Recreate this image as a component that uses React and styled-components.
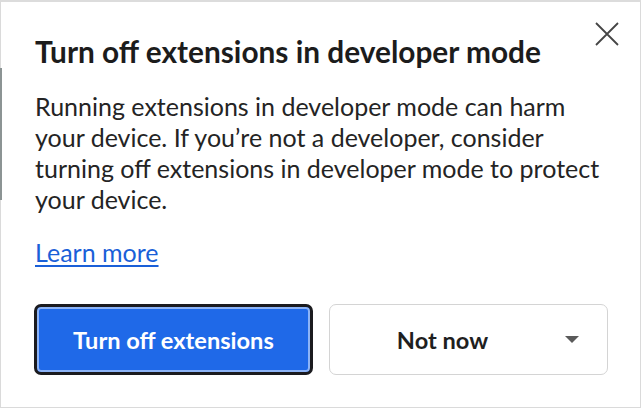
import styled, { createGlobalStyle } from "styled-components";

const Global = createGlobalStyle`
  html, body { margin: 0; padding: 0; background: #fff; }
  body { font-family: Lato, "Noto Sans", sans-serif; }
`;

const Dialog = styled.div`
  position: relative;
  box-sizing: border-box;
  width: 641px;
  height: 408px;
  border: 1px solid #dadada;
  border-top: 2px solid #dcdcdc;
  background: #fff;
  padding: 32px 32px 0 34px;
  color: #1f1f1f;

  &::before {
    content: "";
    position: absolute;
    left: -1px;
    top: 66px;
    width: 2px;
    height: 132px;
    background: #8c9494;
  }
`;

const Header = styled.div`
  display: flex;
  justify-content: space-between;
  align-items: flex-start;
`;

const Title = styled.h1`
  margin: 0;
  font-size: 29.8px;
  font-weight: 700;
  line-height: 36px;
  color: #1c1c1c;
`;

const Close = styled.button`
  border: none;
  background: none;
  padding: 0;
  margin: -14px -13px 0 0;
  width: 28px;
  height: 28px;
  display: flex;
  align-items: center;
  justify-content: center;
`;

const Body = styled.p`
  margin: 21px 0 0;
  font-size: 25px;
  line-height: 31px;
  color: #242424;
`;

const Link = styled.a`
  display: inline-block;
  margin-top: 22px;
  font-size: 25px;
  line-height: 31px;
  color: #1a5fd8;
  text-decoration: underline;
  text-underline-offset: 3px;
`;

const Actions = styled.div`
  display: flex;
  gap: 16px;
  margin-top: 36px;
  margin-left: -1px;
`;

const Button = styled.button`
  box-sizing: border-box;
  width: 280px;
  height: 71px;
  border-radius: 7px;
  font-family: inherit;
  font-size: 23.6px;
  font-weight: 700;
  display: flex;
  align-items: center;
  justify-content: center;
  position: relative;
  ${(p) =>
    p.$primary
      ? `
    background: #1f69e8;
    color: #fff;
    border: 3px solid #1b1b1f;
    box-shadow: inset 0 0 0 2px #8db4f7;
  `
      : `
    background: #fff;
    color: #1f1f1f;
    border: 1.5px solid #d4d4d4;
    padding-right: 58px;
  `}
`;

const Caret = styled.span`
  position: absolute;
  right: 28px;
  top: 31px;
  width: 0;
  height: 0;
  border-left: 7px solid transparent;
  border-right: 7px solid transparent;
  border-top: 7px solid #5a5a5a;
`;

export default function App() {
  return (
    <>
      <Global />
      <Dialog>
        <Header>
          <Title>Turn off extensions in developer mode</Title>
          <Close aria-label="Close">
            <svg width="26" height="26" viewBox="0 0 26 26">
              <path d="M2 2L24 24M24 2L2 24" stroke="#454545" strokeWidth="1.8" />
            </svg>
          </Close>
        </Header>
        <Body>
          Running extensions in developer mode can harm
          <br />
          your device. If you’re not a developer, consider
          <br />
          turning off extensions in developer mode to protect
          <br />
          your device.
        </Body>
        <Link href="#">Learn more</Link>
        <Actions>
          <Button $primary>Turn off extensions</Button>
          <Button>
            Not now
            <Caret />
          </Button>
        </Actions>
      </Dialog>
    </>
  );
}
